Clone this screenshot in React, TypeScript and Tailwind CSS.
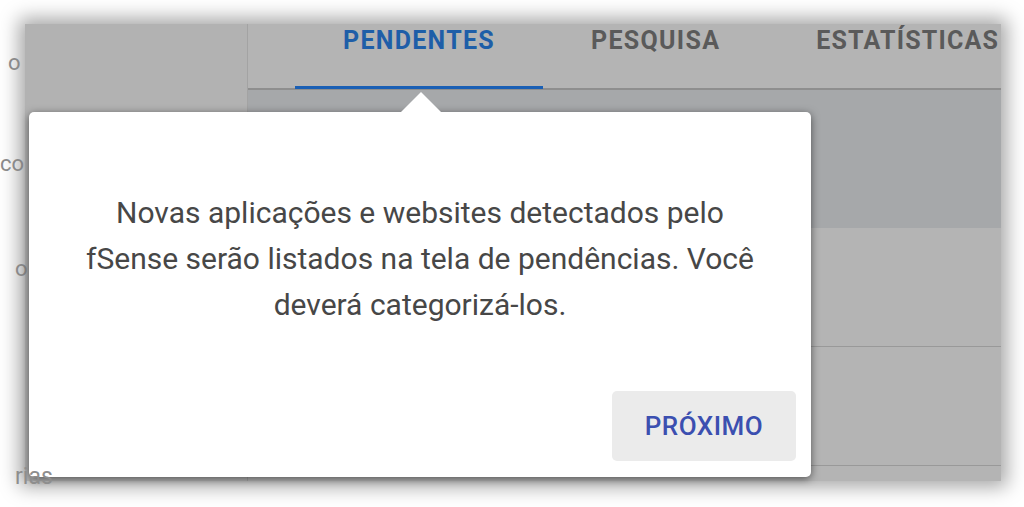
import React from "react";

const font = { fontFamily: "Roboto, 'Noto Sans', Arial, sans-serif" };

export default function App() {
  return (
    <div className="relative w-[1024px] h-[507px] bg-white overflow-hidden" style={font}>
      {/* dimmed app screenshot */}
      <div className="absolute left-[25px] top-[24px] w-[976px] h-[457px] flex bg-[#b3b3b3] shadow-[0_0_18px_6px_rgba(0,0,0,0.35)]">
        {/* sidebar */}
        <div className="w-[223px] h-full flex flex-col bg-[#b2b2b2] border-r border-[#a3a3a3] text-[#8a8a8a] text-[22px]">
          <div className="h-[76px] flex items-center -ml-[17px]">o</div>
          <div className="h-[126px] flex items-center -ml-[25px]">co</div>
          <div className="h-[84px] flex items-center -ml-[10px]">o</div>
          <div className="flex-1" />
        </div>
        {/* main */}
        <div className="flex-1 h-full flex flex-col overflow-hidden">
          <div className="h-[66px] flex pl-[47px] border-b-2 border-[#8e8e8e] bg-[#b4b4b4]">
            <div className="relative px-12 flex items-start pt-[3px] text-[25px] font-bold text-[#1e5ea8] tracking-[1.3px]">
              <span className="leading-[28px]">PENDENTES</span>
              <div className="absolute left-0 right-0 bottom-[-1px] h-[3px] bg-[#1a5fb4]" />
            </div>
            <div className="px-12 flex items-start pt-[3px] text-[25px] font-bold text-[#5a5a5a] tracking-[1.3px]">
              <span className="leading-[28px]">PESQUISA</span>
            </div>
            <div className="px-12 flex items-start pt-[3px] text-[25px] font-bold text-[#5a5a5a] tracking-[1.2px] whitespace-nowrap">
              <span className="leading-[28px]">ESTATÍSTICAS</span>
            </div>
          </div>
          <div className="h-[138px] bg-[#a6a8aa]" />
          <div className="h-[119px] bg-[#b4b4b4] border-b border-[#999999]" />
          <div className="h-[119px] bg-[#b4b4b4] border-b border-[#999999]" />
          <div className="flex-1 bg-[#b4b4b4]" />
        </div>
      </div>

      {/* popover */}
      <div className="absolute left-[29px] top-[112px] w-[782px] h-[365px] bg-white rounded-[5px] shadow-[0_2px_8px_rgba(0,0,0,0.55)] flex flex-col">
        <div className="absolute left-[372px] top-[-20px] w-0 h-0 border-l-[20px] border-r-[20px] border-b-[20px] border-l-transparent border-r-transparent border-b-white" />
        <div className="pt-[78px] px-[20px] text-center text-[30px] leading-[46px] text-[#474747] whitespace-nowrap">
          Novas aplicações e websites detectados pelo
          <br />
          fSense serão listados na tela de pendências. Você
          <br />
          deverá categorizá-los.
        </div>
        <div className="flex-1" />
        <div className="flex justify-end pr-[15px] pb-[16px]">
          <div className="w-[184px] h-[70px] rounded-[5px] bg-[#ebebeb] flex items-center justify-center text-[26px] font-medium text-[#3b4fb0] tracking-[0.5px]">
            PRÓXIMO
          </div>
        </div>
      </div>

      {/* sidebar label fragment showing at bottom edge */}
      <div className="absolute left-[15px] top-[466px] text-[23px] leading-[22px] text-[#8e8e8e]">rias</div>
    </div>
  );
}
